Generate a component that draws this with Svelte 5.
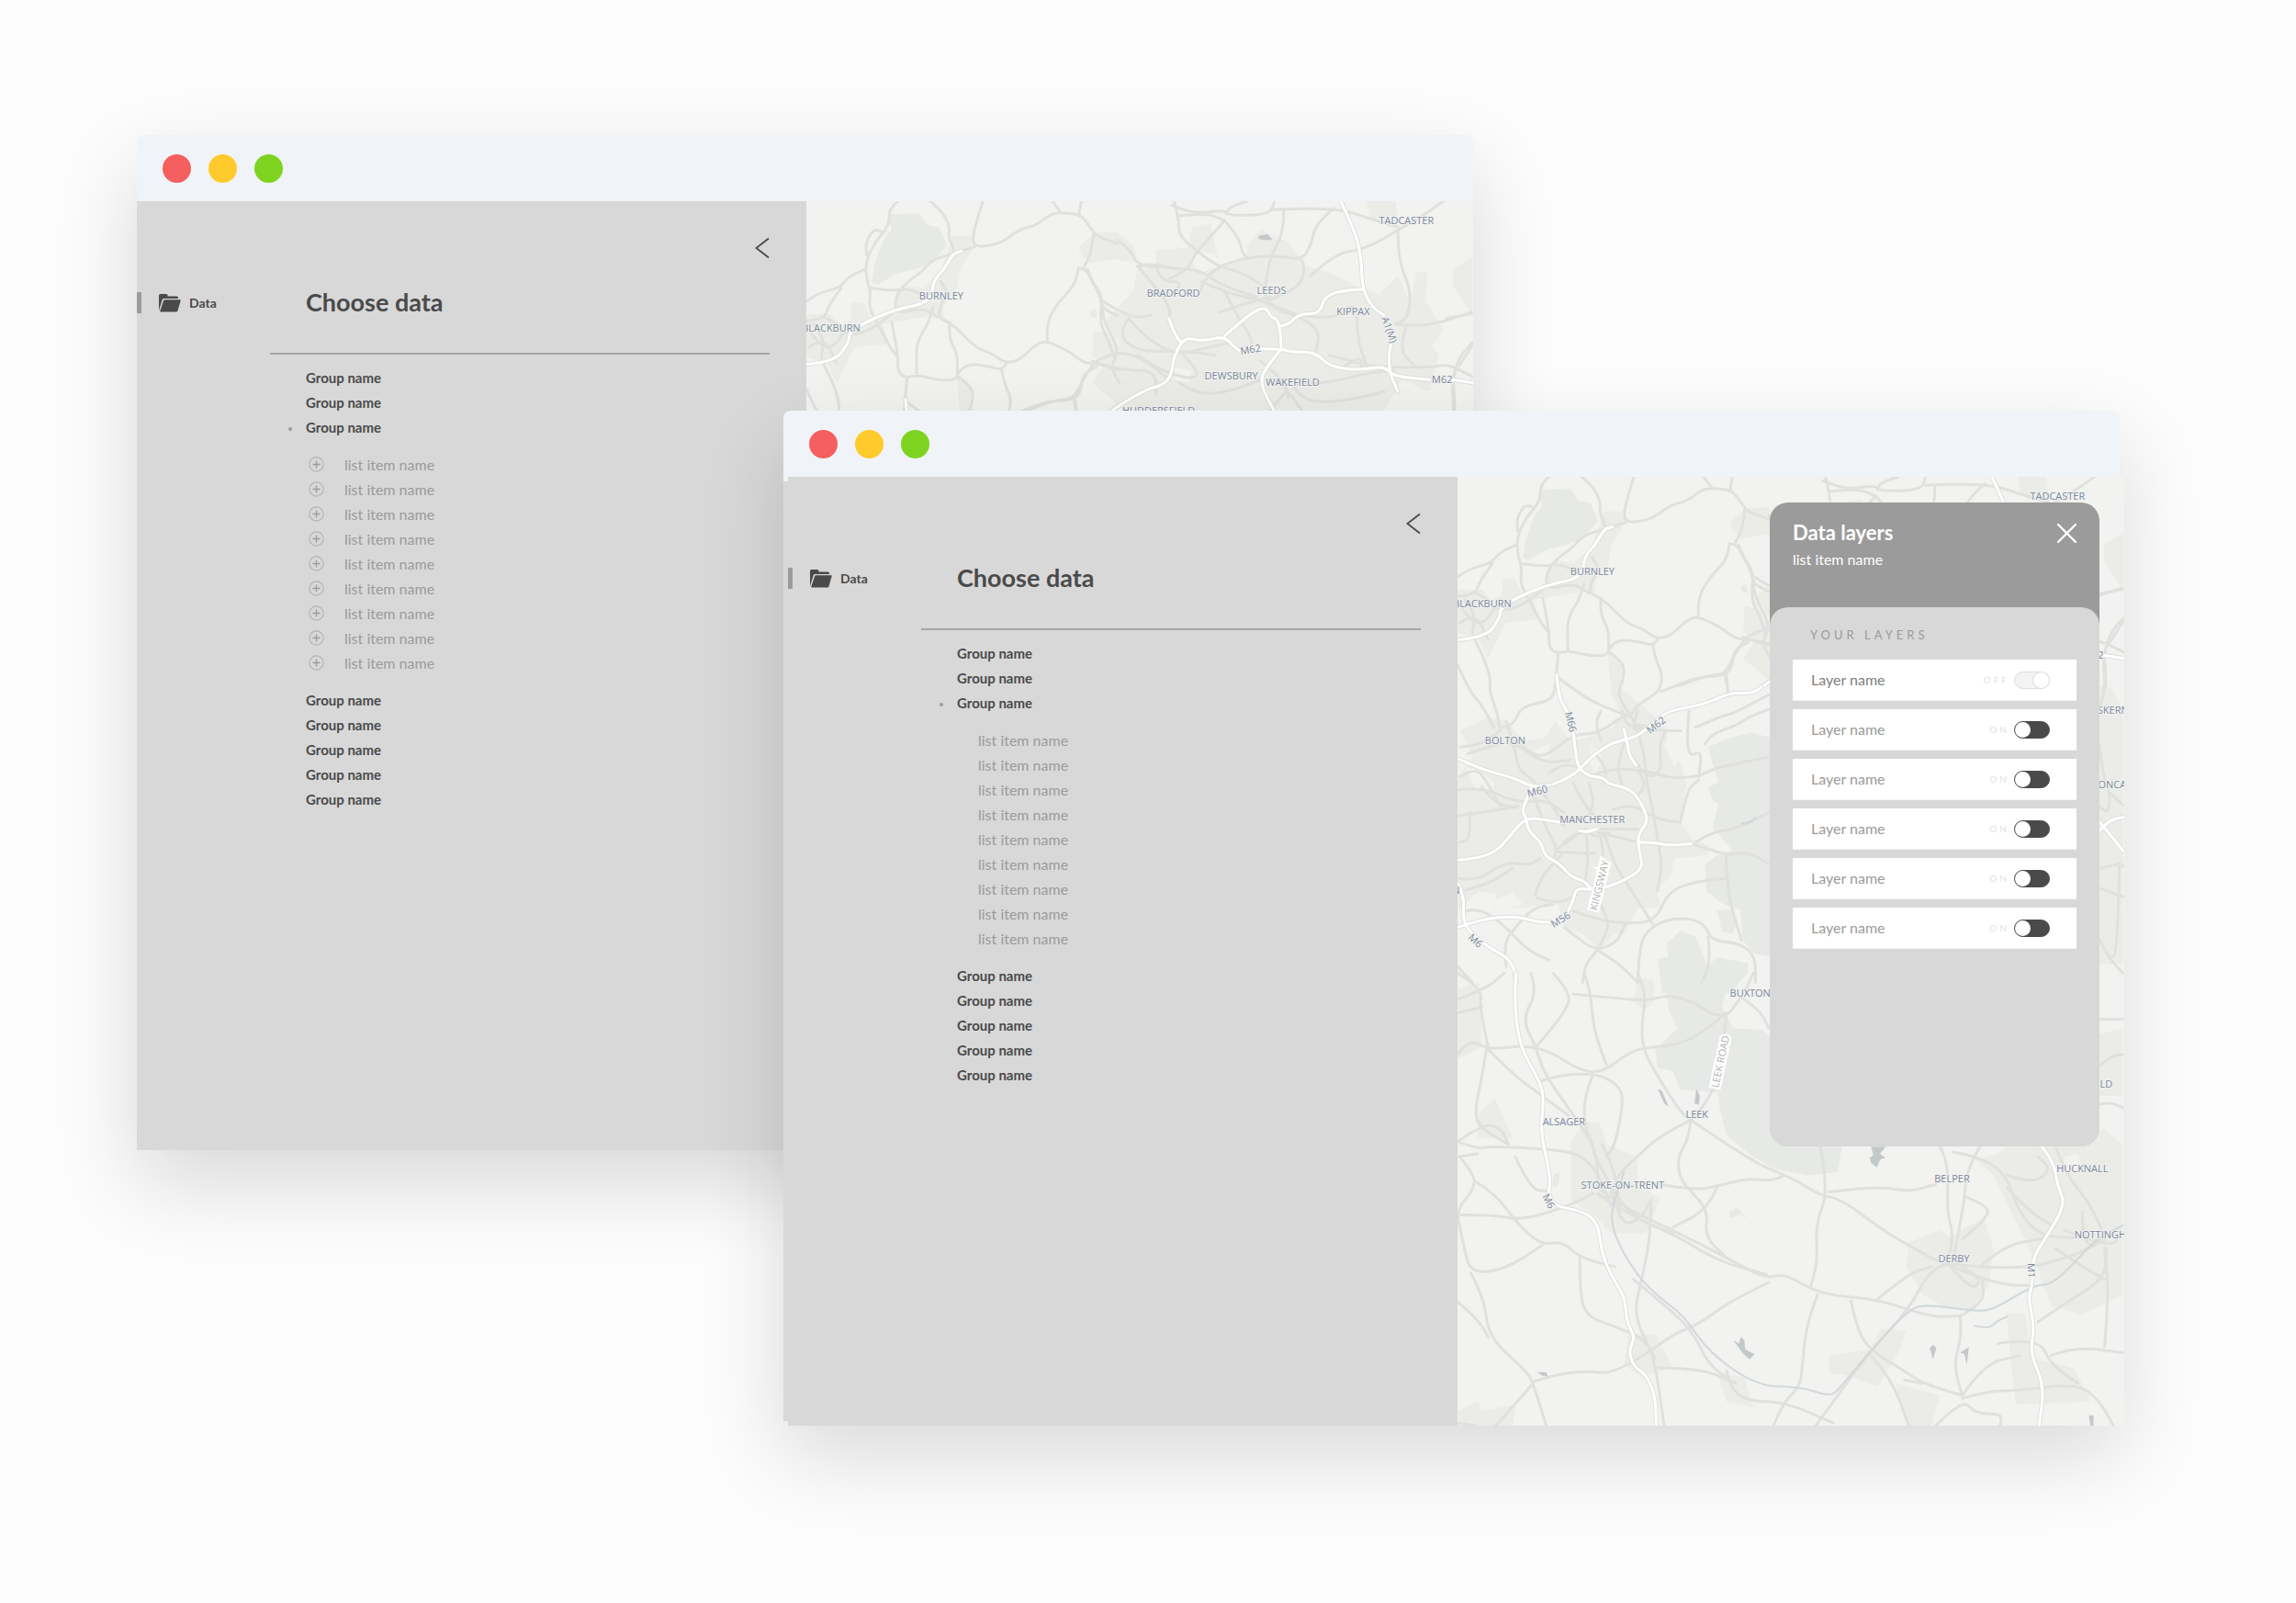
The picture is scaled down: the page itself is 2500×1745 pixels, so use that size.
<script lang="ts">
	type Layer = { id: number; name: string; on: boolean };

	const windows = [
		{ id: 'back', addable: true, showLayers: false },
		{ id: 'front', addable: false, showLayers: true }
	];

	const groupsAbove = ['Group name', 'Group name', 'Group name'];
	const groupsBelow = ['Group name', 'Group name', 'Group name', 'Group name', 'Group name'];
	const listItems = Array.from({ length: 9 }, () => 'list item name');

	let layers: Layer[] = $state(
		Array.from({ length: 6 }, (_, i) => ({ id: i, name: 'Layer name', on: i > 0 }))
	);

	// Rounds the corners of a point list by curving through the segment midpoints
	function curve(points: string): string {
		const pts = points.split(' ').map((p) => p.split(',').map(Number));
		let d = `M${pts[0]}`;
		for (let i = 1; i < pts.length - 1; i++) {
			const [x, y] = pts[i];
			const [nx, ny] = pts[i + 1];
			d += `Q${x},${y} ${(x + nx) / 2},${(y + ny) / 2}`;
		}
		return `${d}L${pts[pts.length - 1]}`;
	}

	// Map sheets, each digitised on its own grid
	const sheets = [
		{
			name: 'west',
			transform: 'translate(-17 -9) scale(0.33333 0.35714)',
			urban: [
				'52,940 100,880 60,800 150,760 210,770 270,830 340,820 370,770 420,830 480,820 560,790 590,750 555,690 540,540 590,600 585,670 650,720 700,760 740,800 730,850 780,900 800,960 780,1080 820,1130 870,1150 870,1180 760,1190 750,1240 700,1290 720,1340 640,1340 600,1420 560,1420 520,1470 460,1420 400,1400 380,1330 270,1340 170,1340 180,1300 120,1290 52,1350',
				'52,370 130,370 160,400 195,390 200,335 240,335 260,380 330,375 350,300 370,280 430,290 490,240 530,130 600,130 590,180 560,220 540,300 500,345 500,380 460,375 300,400 320,460 210,470 150,580 120,520 52,500',
				'940,165 1000,120 1068,120 1068,200 980,215 950,190',
				'990,420 1040,430 1068,480 1068,540 985,500'
			],
			land: [
				'80,910 120,920 170,960 165,990 110,980',
				'490,850 520,860 515,910 500,930 480,890',
				'300,860 350,840 355,880 320,890',
				'735,830 790,820 780,880 760,910 740,870',
				'800,970 850,960 900,1020 885,1060 850,1130 820,1100 795,1040',
				'170,1320 230,1295 265,1330 180,1345'
			],
			park: [
				'325,65 420,62 445,98 485,105 510,160 460,215 400,235 345,245 285,280 265,272 275,215 300,150 330,110 320,85',
				'1140,820 1068,820 1010,805 935,825 870,850 885,900 905,955 870,975 885,1010 905,1025 885,1095 950,1165 900,1180 860,1210 865,1290 920,1330 975,1345 985,1440 1020,1480 1140,1500',
				'900,1350 940,1345 965,1380 950,1420 915,1410',
				'780,1410 830,1430 870,1520 900,1490 1000,1510 1000,1540 940,1600 720,1600 705,1495 740,1490 735,1450',
				'980,360 995,360 1000,375 985,380'
			],
			water: [],
			roads: [
				'350,25 320,50 322,100 275,150 245,210 248,265 262,300 255,350 290,410 330,480 350,500',
				'52,330 90,305 160,290 190,255 245,232',
				'300,120 275,105 245,150 248,190',
				'455,25 490,50 520,100 515,135 535,175 530,195',
				'628,25 610,80 595,130 600,165 660,160 700,145 750,110 800,100 850,65 880,60 940,65 960,80 990,120 1000,130 1068,155',
				'855,25 880,55',
				'950,25 942,65',
				'600,165 530,185 460,205 430,240 375,275 340,320 345,370 430,350 480,380',
				'262,290 330,300 380,290 430,310 465,305',
				'52,390 110,385 120,350 165,290',
				'110,380 150,395 170,430 230,430 290,400 340,360',
				'330,395 340,440 350,500 350,545 375,565 415,555 480,572 540,570 545,550 580,520 650,530 690,540 705,520',
				'465,350 450,400 420,440 410,480 412,550',
				'490,270 520,310 495,330 480,380 520,395 560,430 610,475 660,490 700,520 750,510 790,470 830,450 880,470 920,490 960,520 1000,520 1068,540',
				'520,395 515,440 545,490 545,550',
				'940,230 965,230 985,270 1015,310 1015,350 1068,375',
				'940,230 935,270 900,310 870,340 840,390 838,450',
				'990,120 985,180 960,225',
				'380,565 375,620 370,680 350,710 260,725 235,780 200,790',
				'100,510 130,560 160,640 155,680 180,740 190,800',
				'52,600 90,680 130,720 170,790',
				'375,635 440,680 500,715 580,745 620,760',
				'545,560 595,590 595,640 575,680 590,720 625,760 660,860 670,960 690,1040 710,1160 720,1210 705,1290',
				'690,540 700,590 720,620 715,680 640,720 620,750',
				'715,680 750,670 780,655 850,635 930,632 950,600 955,555 1000,530',
				'930,632 935,680',
				'1015,350 1010,400 1040,450 1060,510',
				'808,740 800,820 810,880 850,860 840,940',
				'830,790 900,760 960,745 1068,690',
				'860,840 880,810 960,785 1000,760 1068,735',
				'1068,880 990,895 890,915 840,940 750,945 700,930 640,920 560,915 480,940',
				'85,870 150,850 230,830 330,900 420,890',
				'60,470 110,440 150,520',
				'60,420 100,470 140,470 170,430',
				'75,400 110,440 100,500',
				'190,800 140,840 60,850',
				'210,770 235,840 250,920 300,950 370,1040 400,1090',
				'240,830 290,870 340,880 430,810 510,810 600,750',
				'52,980 130,970 240,1020 340,1010 400,1050',
				'52,1060 130,1050 250,1030',
				'90,1050 95,1130 60,1140',
				'130,970 170,1020 240,1035',
				'60,940 110,910 150,960 190,1030',
				'300,1000 340,1100 380,1160 360,1200 400,1230',
				'430,960 460,1020 500,1060',
				'480,960 500,1010 480,1060',
				'350,930 390,900 440,910',
				'500,870 540,910 530,960',
				'520,830 500,780 520,740',
				'590,740 600,790 660,780 700,800',
				'640,740 620,800 650,790 720,800 780,800',
				'560,1040 620,1020 700,1070 780,1080',
				'520,1100 640,1100',
				'530,1110 560,1200 600,1260 690,1390',
				'510,1110 640,1140',
				'515,1110 530,1170 520,1210',
				'380,1170 500,1175',
				'400,1140 450,1100 520,1130 545,1110',
				'470,1100 480,1180 470,1250',
				'380,1160 440,1120',
				'52,1250 120,1260 200,1200 290,1210 320,1190',
				'60,1290 150,1270 230,1220',
				'305,1300 320,1250 390,1180',
				'310,1310 380,1330 440,1300',
				'630,890 670,950 720,920 710,850 730,800',
				'640,920 670,960 640,1000',
				'600,830 570,900 590,970',
				'500,1290 540,1370 545,1400 510,1470 470,1510 460,1568',
				'510,1470 580,1510 640,1568',
				'430,1350 480,1370 600,1390 700,1380 740,1290 830,1260 930,1250',
				'640,1568 645,1480 660,1420 720,1380 800,1370 860,1390 880,1440 980,1450 1025,1490 1025,1568',
				'870,1430 880,1500 850,1568',
				'780,1080 800,980 840,950',
				'815,1145 870,1160 930,1180 1000,1170 1068,1205',
				'830,1140 880,1110 960,1100 1068,1050',
				'930,1180 930,1290 980,1440',
				'52,1520 100,1568',
				'80,1350 120,1340 200,1390 280,1470 350,1500',
				'210,1520 200,1450 240,1400 300,1340 360,1330',
				'400,1400 440,1430 500,1470 570,1450 600,1390'
			],
			streams: ['980,1083 1005,1083 1025,1065'],
			motorways: [
				'52,885 120,915 240,945 290,970 350,970 420,940 450,918 500,870 560,835 605,828 660,805 730,742 800,730 860,718 950,682 1015,688 1068,650',
				'375,630 382,700 410,740 430,800 438,880 450,918 485,940 525,942 545,962 605,975 640,1000 678,1075 640,1115 645,1170 658,1220 600,1255 540,1278 485,1285 470,1260 420,1245 385,1205 335,1182 325,1140 285,1110 272,1060 262,1040 280,1005 290,975',
				'52,1195 120,1190 180,1165 215,1130 272,1065 340,1072 390,1080',
				'450,1105 475,1110 505,1100',
				'595,795 605,830 612,875 635,905',
				'640,1140 690,1140 735,1150 815,1145',
				'52,1400 130,1375 240,1365 310,1383 360,1385',
				'400,1375 430,1320 438,1280 485,1285',
				'52,1265 72,1300 70,1370 80,1400 110,1430 160,1465 210,1490 235,1520 243,1568',
				'52,523 145,515 190,455 190,430 225,405 290,375 350,355 460,332 465,270 500,235 530,185 558,178'
			]
		},
		{
			name: 'north',
			transform: 'translate(-17 -19) scale(0.49749 0.33333)',
			urban: [
				'760,270 800,260 800,215 870,210 880,140 920,130 930,210 940,270 1000,250 1000,200 1030,150 1090,190 1130,270 1180,290 1250,340 1290,360 1330,300 1360,400 1350,440 1420,560 1400,680 1340,640 1300,740 730,740 660,650 720,520 690,450 750,350',
				'640,190 710,155 750,200 760,260 690,240 640,240',
				'1260,57 1325,57 1330,150 1270,120',
				'1370,290 1395,290 1390,380 1430,480 1400,540 1350,440',
				'1450,280 1493,240 1493,430 1450,330',
				'370,640 400,740 375,740'
			],
			land: ['890,220 930,230 940,270 900,290 880,260', '840,600 880,610 870,650 840,640'],
			park: ['655,415 668,410 670,435 660,435'],
			water: ['1025,170 1045,165 1055,183 1040,185 1025,180'],
			roads: [
				'716,185 745,215 760,270 850,275 900,285 940,330 1020,370',
				'840,57 850,110 850,170 890,220 935,270 990,290 1040,340',
				'835,70 880,100 950,85 960,105 1050,100 1060,57',
				'850,105 910,95 950,120',
				'1060,85 1190,75 1280,120 1330,140',
				'950,120 910,190 885,230 870,280 830,310',
				'1000,57 960,75 955,100',
				'950,120 980,170 990,230 1000,240',
				'1080,90 1080,160 1050,240 1040,330',
				'1190,80 1150,130 1140,200 1120,250 1070,235 1000,240 920,280 890,370',
				'1140,300 1190,230 1250,215 1300,180 1330,150 1380,110 1430,57',
				'1120,250 1135,320 1050,380',
				'1330,150 1330,250 1360,350 1350,450 1310,460 1400,465 1490,420',
				'760,270 800,340 830,400 830,440',
				'800,270 810,320 860,320 830,370',
				'680,380 740,440 790,430',
				'650,280 660,320 680,370 685,450 720,540 700,600 720,650',
				'740,440 715,490 760,550 850,545 930,560',
				'740,440 780,510 850,560 900,540 960,520',
				'860,560 900,620 870,640 800,600 760,560',
				'660,580 720,610 800,610 800,690',
				'665,585 700,550 760,560 830,640',
				'850,280 790,260 760,270',
				'900,320 960,360 1030,380 1110,430',
				'950,350 980,440 1010,500 1010,550',
				'1040,350 1040,400 1110,430 1160,480 1150,550',
				'940,420 1000,390 1050,370',
				'1075,420 1180,450 1230,400',
				'1240,420 1240,500 1260,590',
				'1180,560 1250,590 1290,600 1400,600 1440,590 1493,630',
				'1210,600 1250,560 1250,600',
				'1493,520 1450,580 1455,740',
				'1100,660 1180,650 1260,620 1320,610',
				'1100,660 1120,710 1200,715 1300,680',
				'1085,680 1050,740',
				'1080,660 1120,740',
				'1350,460 1330,540 1370,600',
				'850,650 890,690 960,680 1030,640',
				'1030,580 1080,640 1090,700',
				'520,740 580,705 620,705 640,640 665,585',
				'620,705 625,740'
			],
			streams: [],
			motorways: [
				'705,740 770,675 818,658 835,620 838,570 855,520 870,503 900,515 950,498 975,540 990,550',
				'828,440 840,490 855,520',
				'950,498 1010,418 1042,403 1050,435 1070,445 1075,540',
				'1020,540 1075,540 1095,550 1150,550 1180,598 1245,610 1300,595 1320,630 1400,640',
				'1448,640 1493,650',
				'1205,57 1235,150 1250,240 1252,345 1275,405 1300,430',
				'1252,345 1210,347 1168,370 1160,425 1115,425 1090,460 1072,465',
				'1075,540 1035,610 1030,660 1058,740',
				'1315,520 1305,590 1330,680'
			]
		},
		{
			name: 'south',
			transform: 'translate(-17 541) scale(0.48473 0.33333)',
			urban: [
				'290,550 320,485 355,490 370,560 440,600 440,680 490,740 460,850 380,850 350,800 290,740',
				'80,460 120,410 160,540 80,540',
				'1050,880 1120,840 1140,860 1220,800 1240,900 1230,1020 1190,1100 1130,1090 1080,1050 1045,960',
				'1270,567 1370,567 1490,510 1531,560 1531,1050 1440,1115 1370,1090 1330,930 1240,660 1200,610 1250,590',
				'870,1250 960,1230 990,1160 1045,1170 1030,1230 980,1350 900,1310 870,1310',
				'620,1310 680,1320 700,1420 640,1400',
				'420,1180 480,1180 520,1290 450,1320 410,1280',
				'1270,1110 1310,1110 1330,1260 1420,1290 1460,1400 1290,1410 1280,1290',
				'1020,1340 1120,1380 1100,1480 1050,1480',
				'36,1430 80,1400 90,1430 165,1410 160,1480 36,1480',
				'36,50 85,30 90,240 36,280',
				'440,20 475,20 480,90 455,120 430,90',
				'1475,200 1531,180 1531,400 1475,400'
			],
			land: ['1400,600 1430,590 1440,640 1400,650'],
			park: [
				'500,0 690,0 640,50 630,110 655,180 720,185 760,230 900,560 890,650 820,660 750,640 700,600 640,530 625,440 620,390 580,385 535,380 520,320 485,310 480,250 530,180 510,120',
				'645,780 665,765 685,800 670,790 650,800',
				'250,660 265,650 262,690 250,700'
			],
			water: [
				'485,378 495,385 510,437 500,425',
				'572,378 580,400 578,430 568,425',
				'965,567 998,567 985,590 997,603 985,610 978,635 965,620 962,603 970,595',
				'655,1200 668,1210 672,1188 680,1200 682,1230 703,1245 692,1262 678,1245',
				'1097,1225 1105,1215 1112,1225 1104,1262 1100,1240',
				'1165,1240 1185,1222 1180,1280 1175,1245',
				'215,1303 235,1305 238,1318 225,1315',
				'1455,1445 1465,1445 1465,1480 1458,1480'
			],
			roads: [
				'36,85 100,50 140,0',
				'36,0 90,50 85,110 105,250',
				'36,130 90,110',
				'36,265 60,215 105,250 190,235 250,260 300,310 355,330 420,260 450,245 520,235 570,210 640,130',
				'200,0 215,60 180,150 210,235 230,330 290,450 340,560',
				'250,0 295,68 270,140 215,235',
				'295,68 380,80 460,90 510,70 570,95 610,140 645,130',
				'320,0 335,60 340,180 370,300',
				'440,0 460,60 450,150 450,245 490,350 540,460 560,480',
				'105,250 160,330 210,385 285,465',
				'100,250 90,340 75,440 80,500 150,560',
				'215,355 270,330 355,330 400,370 408,420 390,560 370,600',
				'340,330 320,400 320,500 350,600 350,700',
				'36,550 80,575 110,565 240,575 310,590 350,650 380,760',
				'36,600 80,590',
				'40,600 75,660 70,710 40,760 36,800',
				'165,600 200,710 240,710',
				'36,550 90,495 130,500 150,560',
				'36,790 120,790 165,805 225,790 300,750 340,720',
				'75,680 120,720 170,820 225,890 270,875 310,930 390,960',
				'36,800 50,900 65,980 140,970 225,890',
				'65,980 95,1060 105,1190 190,1300 205,1340 235,1480',
				'36,1075 80,1130 105,1190',
				'310,930 310,1020 320,1120 400,1160 460,1200 480,1280 500,1480',
				'205,1335 260,1310 330,1300 380,1310 465,1240 520,1180 580,1145 640,1080 735,1010',
				'350,700 400,760 520,840 640,930 730,1000 770,980 850,1050 980,1065 1100,1125 1165,1120',
				'350,720 420,790 530,860 620,940 730,985',
				'560,480 555,540 530,600 535,680 600,770 590,860 640,930',
				'640,130 635,200 620,360 580,450 560,480',
				'560,480 490,530 440,600 400,650 380,720',
				'560,480 690,610 770,660 800,680 850,725 900,740 1000,850 1100,930',
				'490,690 570,710 620,695 690,670 740,680 770,660',
				'620,695 600,770 520,830',
				'850,560 870,710 840,820 845,940 830,1020',
				'870,715 980,695 1050,715 1110,690',
				'845,1050 820,1140 810,1290 805,1350 770,1400 745,1480',
				'1120,567 1140,620 1135,780 1150,850 1140,930',
				'1150,585 1210,600 1270,660 1290,760 1340,860 1440,865',
				'1210,567 1180,640 1175,740 1160,860 1150,930',
				'1175,730 1230,760 1225,800 1170,870',
				'980,1065 1050,980 1100,960',
				'1140,950 1290,975 1430,920 1490,870',
				'1140,950 1100,960 1050,1100 960,1240 840,1480',
				'1145,960 1190,1040 1215,1000 1160,950',
				'1100,930 1145,960 1260,1020 1330,1020',
				'1165,1120 1220,1080 1215,1000',
				'1210,960 1260,890 1360,865',
				'920,1070 930,1150 960,1230 1040,1300 1080,1340 1170,1380',
				'960,1240 1010,1320 1050,1480',
				'1165,1120 1170,1180 1150,1280 1170,1380',
				'1040,1330 1080,1340',
				'1170,1380 1220,1275 1300,1250',
				'1110,1480 1170,1390 1200,1440 1260,1440 1255,1480',
				'1170,1390 1230,1365 1290,1365 1430,1340 1480,1400 1510,1480',
				'1250,1210 1340,1190 1370,1280 1430,1340',
				'1340,1140 1400,1080 1490,1000 1495,900',
				'1370,1250 1420,1220 1531,1240',
				'1490,1220 1500,1050 1490,900',
				'1400,840 1500,900 1531,850',
				'640,1300 650,1360 690,1400 770,1400 880,1470',
				'480,1290 580,1290 660,1340',
				'430,1000 480,1060 560,1160 600,1280 640,1320',
				'470,740 470,850 450,1000 430,1120 480,1260',
				'380,700 400,830 450,800 470,740',
				'340,580 370,680 430,800 520,850',
				'360,560 390,640 400,780',
				'120,1480 170,1400 205,1340',
				'36,1470 80,1480',
				'1270,700 1320,780 1380,830',
				'1270,660 1330,690 1370,640 1340,600',
				'1440,780 1440,900 1490,870',
				'1380,900 1440,960 1490,1000',
				'1380,567 1400,650 1460,760 1490,860',
				'675,80 715,120 735,180',
				'645,130 675,80 700,0',
				'1475,430 1500,420 1531,440',
				'1480,150 1531,150',
				'1480,300 1505,270 1531,265'
			],
			streams: [
				'410,650 380,760 385,850 430,970 480,1050 545,1120 600,1240 710,1350 805,1352 872,1382 890,1365 960,1240 1050,1098 1090,1083 1200,1105 1240,1100 1330,1020 1370,1018 1420,950 1470,870 1531,825',
				'1197,1152 1230,1163 1245,1140 1270,1122'
			],
			motorways: [
				'167,0 162,90 175,240 215,340 230,400 222,520 235,600 245,690 238,720 255,762 310,775 350,810 360,920 385,1000 412,1060 415,1140 435,1190 420,1230 430,1285 458,1310 480,1380 482,1485',
				'1345,560 1375,610 1385,700 1402,755 1360,860 1328,930 1328,1020 1318,1060 1333,1160 1322,1240 1355,1350 1342,1485'
			]
		},
		{
			name: 'east',
			transform: 'translate(313 -9) scale(0.33333)',
			urban: ['1155,710 1200,720 1237,790 1237,1620 1155,1620'],
			land: [],
			park: [],
			water: [],
			roads: [
				'1155,410 1237,395',
				'1237,500 1200,560 1170,600 1180,720 1155,800',
				'1160,900 1170,1000 1195,1060 1190,1130 1155,1100',
				'1195,1060 1237,1100',
				'1155,1310 1225,1290 1237,1300',
				'1155,1370 1237,1400',
				'1225,1290 1220,1590 1190,1600',
				'1155,1530 1190,1600 1237,1650'
			],
			streams: [],
			motorways: ['1155,1150 1190,1190 1237,1250', '1155,1190 1190,1150 1237,1140']
		}
	];

	const towns = [
		{ text: 'TADCASTER', x: 654, y: 21 },
		{ text: 'BURNLEY', x: 147, y: 103 },
		{ text: 'BLACKBURN', x: 27, y: 138 },
		{ text: 'BRADFORD', x: 400, y: 100 },
		{ text: 'LEEDS', x: 507, y: 97 },
		{ text: 'KIPPAX', x: 596, y: 120 },
		{ text: 'DEWSBURY', x: 463, y: 190 },
		{ text: 'WAKEFIELD', x: 530, y: 197 },
		{ text: 'HUDDERSFIELD', x: 384, y: 228 },
		{ text: 'ASKERN', x: 711, y: 254 },
		{ text: 'BOLTON', x: 52, y: 287 },
		{ text: 'DONCASTER', x: 722, y: 335 },
		{ text: 'MANCHESTER', x: 147, y: 373 },
		{ text: 'WARRINGTON', x: -34, y: 450 },
		{ text: 'BUXTON', x: 319, y: 562 },
		{ text: 'MANSFIELD', x: 684, y: 661 },
		{ text: 'LEEK', x: 261, y: 694 },
		{ text: 'ALSAGER', x: 116, y: 702 },
		{ text: 'HUCKNALL', x: 681, y: 753 },
		{ text: 'BELPER', x: 539, y: 764 },
		{ text: 'STOKE-ON-TRENT', x: 180, y: 771 },
		{ text: 'NOTTINGHAM', x: 709, y: 825 },
		{ text: 'DERBY', x: 541, y: 851 }
	];

	const roadLabels = [
		{ text: 'M62', x: 484, y: 161, angle: -10 },
		{ text: 'M62', x: 693, y: 194, angle: 0 },
		{ text: 'A1(M)', x: 636, y: 140, angle: 70 },
		{ text: 'M66', x: 124, y: 267, angle: 76 },
		{ text: 'M62', x: 216, y: 270, angle: -38 },
		{ text: 'M60', x: 87, y: 342, angle: -14 },
		{ text: 'M56', x: 112, y: 482, angle: -32 },
		{ text: 'M6', x: 20, y: 505, angle: 42 },
		{ text: 'M6', x: 100, y: 789, angle: 62 },
		{ text: 'M1', x: 626, y: 865, angle: 88 }
	];

	const streetLabels = [
		{ text: 'KINGSWAY', x: 154, y: 445, angle: -76 },
		{ text: 'LEEK ROAD', x: 286, y: 637, angle: -78 }
	];
</script>

{#snippet map()}
	<svg class="map" viewBox="0 0 727 1034" preserveAspectRatio="xMinYMin slice" role="img" aria-label="Map">
		{#each sheets as sheet (sheet.name)}
			<g transform={sheet.transform}>
				{#each sheet.urban as points}<polygon class="urban" {points} />{/each}
				{#each sheet.land as points}<polygon class="land" {points} />{/each}
				{#each sheet.park as points}<polygon class="park" {points} />{/each}
			</g>
		{/each}
		{#each sheets as sheet (sheet.name)}
			<g transform={sheet.transform}>
				{#each sheet.roads as points}<path class="road" d={curve(points)} />{/each}
				{#each sheet.water as points}<polygon class="water" {points} />{/each}
				{#each sheet.streams as points}<path class="stream" d={curve(points)} />{/each}
			</g>
		{/each}
		{#each sheets as sheet (sheet.name)}
			<g transform={sheet.transform}>
				{#each sheet.motorways as points}<path class="casing" d={curve(points)} />{/each}
				{#each sheet.motorways as points}<path class="motorway" d={curve(points)} />{/each}
			</g>
		{/each}
		{#each towns as { text, x, y }}
			<text {x} {y}>{text}</text>
		{/each}
		{#each roadLabels as { text, x, y, angle }}
			<text {x} {y} transform="rotate({angle} {x} {y})">{text}</text>
		{/each}
		{#each streetLabels as { text, x, y, angle }}
			<text class="street" {x} {y} transform="rotate({angle} {x} {y})">{text}</text>
		{/each}
	</svg>
{/snippet}

{#snippet layersPanel()}
	<section class="layers">
		<header class="layers-header">
			<div>
				<h2>Data layers</h2>
				<p>list item name</p>
			</div>
			<button class="icon-button" aria-label="Close">
				<svg width="21" height="21" viewBox="0 0 21 21">
					<path d="M1 1L20 20M20 1L1 20" fill="none" stroke="#fff" stroke-width="2.4" stroke-linecap="round" />
				</svg>
			</button>
		</header>
		<div class="layers-body">
			<h3>YOUR LAYERS</h3>
			<ul>
				{#each layers as layer (layer.id)}
					<li class="layer" class:off={!layer.on}>
						<label for="layer-{layer.id}">{layer.name}</label>
						<span class="state">{layer.on ? 'ON' : 'OFF'}</span>
						<input id="layer-{layer.id}" type="checkbox" bind:checked={layer.on} />
					</li>
				{/each}
			</ul>
		</div>
	</section>
{/snippet}

<main class="desktop">
	{#each windows as win (win.id)}
		<article class="window {win.id}">
			<div class="titlebar">
				<button class="dot red" aria-label="Close window"></button>
				<button class="dot yellow" aria-label="Minimise window"></button>
				<button class="dot green" aria-label="Zoom window"></button>
			</div>
			<div class="content">
				<div class="sidebar">
					<nav>
						<a class="nav-item" href="#data">
							<svg width="24" height="20" viewBox="0 0 24 20">
								<path d="M0 18V1.500Q0 0 1.500 0H8Q9.500 0 9.500 1.500V2.500H19.500Q21 2.500 21 4V5H5.500Q4.200 5 3.700 6.200Z" fill="#4a4a4a" />
								<path d="M5.200 7Q5.600 6.200 6.500 6.200H23Q24 6.200 23.700 7.200L20.400 18.600Q20 19.600 19 19.600H2Q1 19.600 1.300 18.600Z" fill="#4a4a4a" />
							</svg>
							Data
						</a>
					</nav>
					<div class="chooser">
						<div class="chooser-top">
							<button class="icon-button" aria-label="Collapse">
								<svg width="16" height="24" viewBox="0 0 16 24">
									<path d="M15 1.500L1.500 12L15 22.500" fill="none" stroke="#4a4a4a" stroke-width="1.800" />
								</svg>
							</button>
						</div>
						<h1>Choose data</h1>
						<ul class="groups">
							{#each groupsAbove as group, i}
								<li class:open={i === groupsAbove.length - 1}>{group}</li>
							{/each}
						</ul>
						<ul class="items" class:addable={win.addable}>
							{#each listItems as item}
								<li>
									{#if win.addable}
										<button class="icon-button" aria-label="Add {item}">
											<svg width="17" height="17" viewBox="0 0 17 17" fill="none">
												<circle cx="8.500" cy="8.500" r="7.600" stroke="#b4b4b4" stroke-width="1.200" />
												<path d="M8.500 4.500V12.500M4.500 8.500H12.500" stroke="#9b9b9b" stroke-width="1.300" />
											</svg>
										</button>
									{/if}
									{item}
								</li>
							{/each}
						</ul>
						<ul class="groups">
							{#each groupsBelow as group}
								<li>{group}</li>
							{/each}
						</ul>
					</div>
				</div>
				<div class="map-pane">
					{@render map()}
					{#if win.showLayers}
						{@render layersPanel()}
					{/if}
				</div>
			</div>
		</article>
	{/each}
</main>

<style>
	:global(body) {
		margin: 0;
		background: #fcfcfc;
	}

	h1, h2, h3, p, ul {
		margin: 0;
		padding: 0;
	}

	ul { list-style: none; }

	button {
		padding: 0;
		border: 0;
		background: none;
		cursor: pointer;
	}

	.desktop {
		position: relative;
		min-height: 100vh;
		overflow: hidden;
		font-family: Lato, 'Noto Sans', sans-serif;
		font-size: 16px;
		color: #4a4a4a;
	}

	/* windows */
	.window {
		position: absolute;
		width: 58.2%;
		border-radius: 8px 8px 0 0;
		box-shadow: 0 36px 90px rgba(0, 0, 0, 0.14);
	}

	.window.back {
		left: 149px;
		top: 147px;
		background: #f0f4f8;
	}

	.window.front {
		left: 853px;
		top: 447px;
		background: linear-gradient(#f0f4f8 77px, #d8d8d8 77px);
	}

	.titlebar {
		display: flex;
		align-items: center;
		gap: 19px;
		height: 72px;
		padding: 0 28px;
	}

	.dot {
		width: 31px;
		height: 31px;
		border-radius: 50%;
	}

	.dot.red { background: #f55f5f; }
	.dot.yellow { background: #ffca2b; }
	.dot.green { background: #7ed321; }

	.content {
		display: grid;
		grid-template-columns: 729fr 726fr;
		min-height: 1033px;
	}

	/* the front window's content overhangs its frame */
	.front .content { margin: 0 -5px -5px 5px; }

	/* sidebar */
	.sidebar {
		display: grid;
		grid-template-columns: 145px 1fr;
		padding-right: 40px;
		background: #d8d8d8;
	}

	nav { padding-top: 99px; }

	.nav-item {
		display: flex;
		align-items: center;
		gap: 9px;
		height: 23px;
		padding-left: 19px;
		border-left: 5px solid #9b9b9b;
		color: inherit;
		font-size: 14px;
		font-weight: 700;
		text-decoration: none;
	}

	.chooser-top {
		display: flex;
		justify-content: flex-end;
		padding-top: 39px;
	}

	.icon-button { display: flex; }

	h1 {
		padding: 30px 39px 38px;
		border-bottom: 2px solid #a6a6a6;
		font-size: 27px;
		line-height: 34px;
	}

	.groups {
		padding-left: 39px;
		font-size: 15px;
		font-weight: 700;
		line-height: 27px;
	}

	h1 + .groups { padding-top: 12px; }

	.open::before {
		content: '';
		float: left;
		width: 4px;
		height: 4px;
		margin: 13px 0 0 -19px;
		border-radius: 50%;
		background: #9b9b9b;
	}

	.items {
		padding: 13px 0 14px 62px;
		line-height: 27px;
		color: #9b9b9b;
	}

	.items.addable { padding-left: 42px; }

	.items li {
		display: flex;
		align-items: center;
		gap: 22px;
	}

	/* map */
	.map-pane {
		position: relative;
		background: #f2f2f0;
	}

	.map {
		position: absolute;
		width: 100%;
		height: 100%;
		font-family: 'Open Sans', 'Noto Sans', sans-serif;
		font-size: 11px;
	}

	.urban { fill: #ebece8; }
	.land { fill: #f2f2f0; }
	.park { fill: #e6e9e6; }
	.water { fill: #c3c9cb; }

	.road,
	.stream,
	.casing,
	.motorway {
		fill: none;
		stroke-linejoin: round;
		stroke-linecap: round;
		vector-effect: non-scaling-stroke;
	}

	.road {
		stroke: #e0e0de;
		stroke-width: 3px;
	}

	.stream {
		stroke: #d0d8da;
		stroke-width: 2px;
	}

	.casing {
		stroke: #dfdfde;
		stroke-width: 5px;
	}

	.motorway {
		stroke: #fff;
		stroke-width: 3px;
	}

	text {
		fill: #7a879b;
		stroke: #f2f2f0;
		stroke-width: 2px;
		paint-order: stroke;
		text-anchor: middle;
		dominant-baseline: central;
	}

	.street {
		fill: #b0b0b0;
		stroke: #fff;
		stroke-width: 5px;
	}

	/* data layers */
	.layers {
		position: absolute;
		top: 28px;
		right: 27px;
		width: 359px;
		border-radius: 20px;
		background: linear-gradient(#9b9b9b 150px, #d8d8d8 150px);
	}

	.layers-header {
		display: flex;
		justify-content: space-between;
		align-items: flex-start;
		padding: 18px 25px 39px;
		color: #fff;
	}

	.layers-header .icon-button { padding-top: 5px; }

	h2 {
		font-size: 22px;
		line-height: 30px;
	}

	.layers-header p { line-height: 27px; }

	.layers-body {
		min-height: 587px;
		padding: 0 25px;
		box-sizing: border-box;
		border-radius: 20px;
		background: #d8d8d8;
	}

	h3 {
		padding: 20px 19px 17px;
		font-size: 13px;
		font-weight: 400;
		line-height: 20px;
		letter-spacing: 4px;
		color: #9b9b9b;
	}

	.layers ul {
		display: grid;
		gap: 9px;
	}

	.layer {
		display: flex;
		align-items: center;
		height: 45px;
		padding: 0 29px 0 20px;
		border-bottom: 1px solid #f4f4f4;
		box-sizing: border-box;
		background: #fff;
		color: #9b9b9b;
	}

	.layer.off { color: #808080; }

	.layer label {
		flex: 1;
		padding-bottom: 2px;
	}

	.state {
		margin-right: 5px;
		font-size: 10px;
		letter-spacing: 3px;
		color: #e2e2e2;
	}

	.layer input {
		display: flex;
		justify-content: flex-end;
		width: 39px;
		height: 19px;
		margin: 0;
		box-sizing: border-box;
		border: 1px solid #dedede;
		border-radius: 10px;
		background: #f3f3f3;
		appearance: none;
	}

	.layer input::before {
		content: '';
		width: 17px;
		height: 17px;
		border-radius: 50%;
		background: #fff;
		box-shadow: 0 0 0 1px #dedede;
	}

	.layer input:checked {
		justify-content: flex-start;
		border-color: #4a4a4a;
		background: #4a4a4a;
	}

	.layer input:checked::before { box-shadow: none; }
</style>
